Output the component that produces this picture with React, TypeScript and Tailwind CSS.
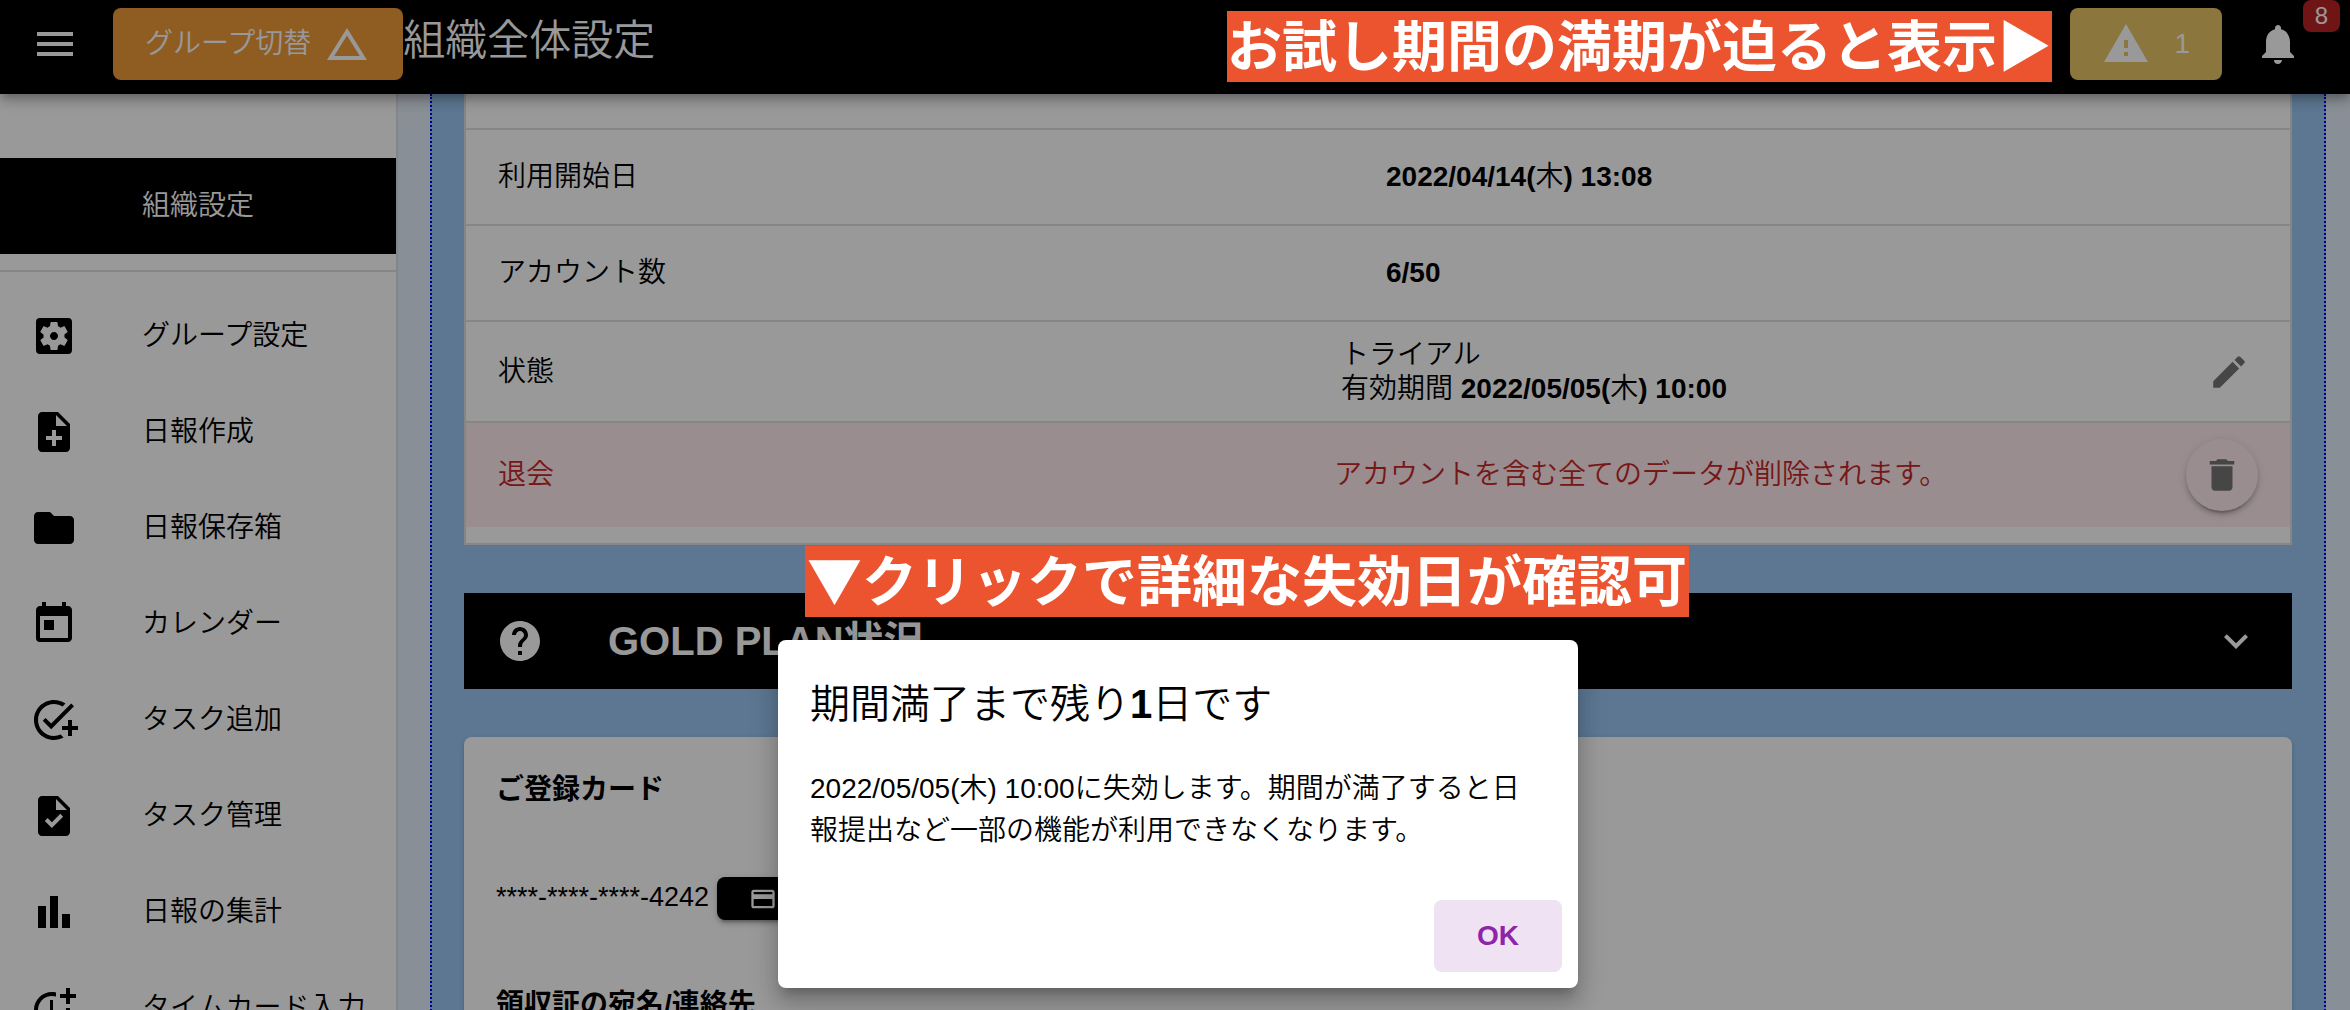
import type { ReactNode } from "react";
import type { IconType } from "react-icons";
import {
  MdAddTask,
  MdBarChart,
  MdChangeHistory,
  MdCreditCard,
  MdDelete,
  MdEdit,
  MdExpandMore,
  MdFolder,
  MdHelp,
  MdMenu,
  MdMoreTime,
  MdNoteAdd,
  MdNotifications,
  MdSettingsApplications,
  MdTask,
  MdToday,
  MdWarning,
} from "react-icons/md";

const menu: { icon: IconType; label: string }[] = [
  { icon: MdSettingsApplications, label: "グループ設定" },
  { icon: MdNoteAdd, label: "日報作成" },
  { icon: MdFolder, label: "日報保存箱" },
  { icon: MdToday, label: "カレンダー" },
  { icon: MdAddTask, label: "タスク追加" },
  { icon: MdTask, label: "タスク管理" },
  { icon: MdBarChart, label: "日報の集計" },
  { icon: MdMoreTime, label: "タイムカード入力" },
];

function Header() {
  return (
    <header className="relative z-10 flex h-[94px] shrink-0 items-center bg-black pl-[31px] text-white shadow-[0_4px_8px_-2px_rgba(0,0,0,0.2),0_8px_10px_rgba(0,0,0,0.14),0_2px_20px_rgba(0,0,0,0.12)]">
      <div className="flex flex-1 items-center pb-1.5">
        <button aria-label="メニュー">
          <MdMenu className="size-12" />
        </button>
        <button className="ml-[34px] flex h-[72px] items-center gap-3 rounded-lg bg-[#ee9b3a] px-8">
          <span>グループ切替</span>
          <MdChangeHistory className="size-12" />
        </button>
        <h1 className="pb-1.5 text-[42px] leading-[64px]">組織全体設定</h1>
      </div>
      <button className="mr-8 mb-1.5 flex h-[72px] items-center gap-6 rounded-lg bg-[#e8c566] px-8">
        <MdWarning className="size-12" />
        <span>1</span>
      </button>
      <button aria-label="通知" className="relative mr-12 mb-1.5">
        <MdNotifications className="size-12" />
        <span className="absolute -top-5 -right-[38px] flex h-8 w-[37px] items-center justify-center rounded-lg bg-[#b92323] text-2xl">
          8
        </span>
      </button>
    </header>
  );
}

function Sidebar() {
  return (
    <nav className="w-[398px] shrink-0 border-r-2 border-[#e0e0e0] bg-white pt-16">
      <a href="#org" className="flex h-24 items-center bg-black pl-[142px] text-white">
        組織設定
      </a>
      <ul className="mt-4 border-t-2 border-[#e0e0e0] pt-4">
        {menu.map(({ icon: Icon, label }) => (
          <li key={label}>
            <a href={"#" + label} className="flex h-24 items-center gap-16 pl-[30px]">
              <Icon className="size-12" />
              <span>{label}</span>
            </a>
          </li>
        ))}
      </ul>
    </nav>
  );
}

function Row({ label, value, action, className }: { label: string; value: ReactNode; action?: ReactNode; className: string }) {
  return (
    <div className={"flex items-center gap-8 px-8 " + className}>
      <dl className="flex flex-1 items-center gap-4">
        <dt className="flex-1">{label}</dt>
        <dd className="flex-1">{value}</dd>
      </dl>
      {action}
    </div>
  );
}

function Account() {
  return (
    <section className="border-2 border-t-0 border-[#e0e0e0] bg-white pb-4">
      <div className="h-9 border-b-2 border-[#e0e0e0]" />
      <Row
        className="h-24 border-b-2 border-[#e0e0e0]"
        label="利用開始日"
        value={
          <>
            <b className="font-bold">2022/04/14(</b>木<b className="font-bold">) 13:08</b>
          </>
        }
      />
      <Row
        className="h-24 border-b-2 border-[#e0e0e0]"
        label="アカウント数"
        value={<b className="font-bold">6/50</b>}
      />
      <Row
        className="h-[101px] border-b-2 border-[#e0e0e0]"
        label="状態"
        value={
          <>
            トライアル
            <br />
            有効期間 <b className="font-bold">2022/05/05(</b>木<b className="font-bold">) 10:00</b>
          </>
        }
        action={
          <button aria-label="編集" className="flex w-[58px] justify-center text-[#757575]">
            <MdEdit className="size-[42px]" />
          </button>
        }
      />
      <Row
        className="h-[104px] bg-[#ffebee] text-[#c62828]"
        label="退会"
        value="アカウントを含む全てのデータが削除されます。"
        action={
          <button
            aria-label="削除"
            className="flex size-[72px] items-center justify-center rounded-full text-[#757575] bg-[#ffebee] shadow-[0_6px_2px_-4px_rgba(0,0,0,0.2),0_4px_4px_rgba(0,0,0,0.14),0_2px_10px_rgba(0,0,0,0.12)]"
          >
            <MdDelete className="size-[42px]" />
          </button>
        }
      />
    </section>
  );
}

function Main() {
  return (
    <main className="min-w-0 flex-1 bg-[#e5effa] pr-6 pl-8">
      <div className="flex flex-col gap-12 border-x-2 border-dotted border-[#0000ff] bg-[#9bc7f3] px-8">
        <Account />
        <button className="flex h-24 items-center bg-black px-8 text-white">
          <MdHelp className="size-12" />
          <span className="ml-16 flex-1 text-left text-[40px] font-bold">GOLD PLAN状況</span>
          <MdExpandMore className="size-12" />
        </button>
        <section className="rounded-lg bg-white px-8 pt-8 pb-64 shadow-[0_4px_2px_-2px_rgba(0,0,0,0.2),0_2px_2px_rgba(0,0,0,0.14),0_2px_6px_rgba(0,0,0,0.12)]">
          <h2 className="leading-[42px] font-bold">ご登録カード</h2>
          <div className="mt-[66px] flex items-center gap-2">
            <span className="pb-1 text-[27px]">****-****-****-4242</span>
            <button
              aria-label="カード変更"
              className="flex h-[43px] w-40 items-center rounded-lg bg-black px-8 text-white shadow-[0_6px_2px_-4px_rgba(0,0,0,0.2),0_4px_4px_rgba(0,0,0,0.14),0_2px_10px_rgba(0,0,0,0.12)]"
            >
              <MdCreditCard className="size-7" />
            </button>
          </div>
          <h2 className="mt-16 leading-[42px] font-bold">領収証の宛名/連絡先</h2>
        </section>
      </div>
    </main>
  );
}

function ExpiryDialog() {
  return (
    <div className="absolute inset-0 z-20 flex items-end justify-center bg-black/40 pb-[22px] pl-1.5">
      <div
        role="dialog"
        aria-labelledby="expiry-title"
        className="w-[800px] rounded-lg bg-white text-black shadow-[0_10px_10px_-6px_rgba(0,0,0,0.2),0_16px_20px_2px_rgba(0,0,0,0.14),0_6px_28px_4px_rgba(0,0,0,0.12)]"
      >
        <h2 id="expiry-title" className="p-8 text-[40px] leading-[64px]">
          期間満了まで残り<b className="font-bold">1</b>日です
        </h2>
        <p className="px-8 pb-8 leading-[42px]">
          2022/05/05(木) 10:00に失効します。期間が満了すると日報提出など一部の機能が利用できなくなります。
        </p>
        <div className="flex justify-end p-4">
          <button className="h-[72px] w-32 rounded-lg bg-[#efe2f2] font-bold text-[#8e24aa]">OK</button>
        </div>
      </div>
    </div>
  );
}

export default function App() {
  return (
    <div
      lang="ja"
      className="relative flex h-screen flex-col overflow-hidden bg-white font-['Liberation_Sans','Noto_Sans_CJK_JP',sans-serif] text-[28px] leading-[34px] font-[350] text-black"
    >
      <Header />
      <div className="flex min-h-0 flex-1">
        <Sidebar />
        <Main />
      </div>
      <ExpiryDialog />
      <p className="absolute top-[11px] right-[298px] z-30 bg-[#ec542f] pb-2 font-['Noto_Sans_CJK_JP',sans-serif] text-[55px] leading-[63px] font-bold text-white">
        お試し期間の満期が迫ると表示▶
      </p>
      <p className="absolute top-[546px] left-[805px] z-30 bg-[#ec542f] px-0.5 pb-2 font-['Noto_Sans_CJK_JP',sans-serif] text-[55px] leading-[63px] font-bold text-white">
        ▼クリックで詳細な失効日が確認可
      </p>
    </div>
  );
}
